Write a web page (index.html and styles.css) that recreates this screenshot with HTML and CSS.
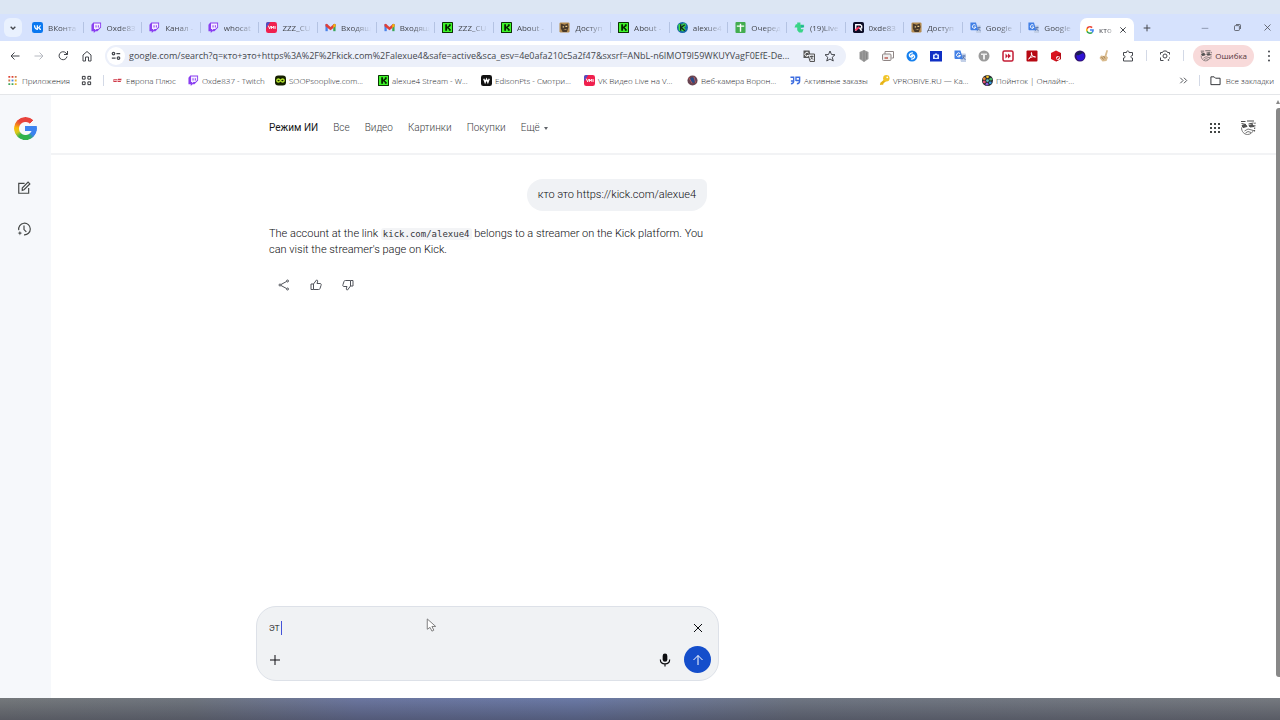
FILE: index.html
```html
<!DOCTYPE html>
<html lang="ru">
<head>
  <meta charset="UTF-8" />
  <title>кто это https://kick.com/alexue4 - Google</title>
  <meta name="viewport" content="width=device-width, initial-scale=1.0" />
  <link rel="stylesheet" href="styles.css">
</head>
<body>

  <!-- Shared icons -->
  <svg class="sprite" aria-hidden="true">
    <symbol id="vk" viewBox="0 0 24 24"><rect width="24" height="24" rx="5" fill="#0a78f0"/><path d="M4 7c.2 6.500 3.500 10.500 9 10.500V13.500c2 .3 3.300 2 4 4h3c-.8-2.800-2.500-4.500-4-5.300 1.500-.9 3-2.800 3.500-5.200h-2.700c-.6 2-2 4-3.800 4.200V7h-2.700v7C8.500 13.500 7 11 6.800 7z" fill="#fff"/></symbol>
    <symbol id="twitch" viewBox="0 0 24 24"><path d="M5 1 1 6v14h5v4l4-4h4l8-8V1z" fill="#8a3ff0"/><path d="M6.500 3.500H20V11l-4 4h-4l-3 3v-3H6.500z" fill="#f5efff"/><path d="M11 7v5M16 7v5" stroke="#8a3ff0" stroke-width="2.200"/></symbol>
    <symbol id="vkvideo" viewBox="0 0 24 24"><rect width="24" height="24" rx="5" fill="#f0204e"/><path d="M0 5a5 5 0 0 1 5-5l4 0L0 14z" fill="#4a50c8"/><path d="M5 8l3 7 2-6M12 15V9l2.500 4L17 9v6M20 9v6" fill="none" stroke="#fff" stroke-width="2"/></symbol>
    <symbol id="gmail" viewBox="0 0 24 24"><path d="M1 5h5v15H1z" fill="#4a82e8"/><path d="M18 5h5v15h-5z" fill="#3aa657"/><path d="M1 5l3-1 8 7 8-7 3 1v4l-11 9L1 9z" fill="#e0403a"/><path d="M18 6l3-2 2 2v3l-5 4z" fill="#f3b90d"/></symbol>
    <symbol id="kick" viewBox="0 0 24 24"><rect width="24" height="24" rx="1" fill="#062300"/><rect x="2" y="2" width="20" height="20" fill="#3ef52a"/><path d="M7 5h4v5h2V8h2V5h4v4h-2v2h-2v2h2v2h2v4h-4v-3h-2v-2h-2v5H7z" fill="#062300"/></symbol>
    <symbol id="access" viewBox="0 0 24 24"><rect x="1" y="1" width="22" height="22" rx="3" fill="#b58c50"/><path d="M4 3l8 3 7-3 2 8-4 11H8L4 14z" fill="#493a2a"/><path d="M8 9h3v3H8zM14 8h4v3h-4zM9 16l7-1v2z" fill="#efcf8e"/></symbol>
    <symbol id="kround" viewBox="0 0 24 24"><circle cx="12" cy="12" r="12" fill="#1768a8"/><path d="M3 5h8v14H4z" fill="#43e43c"/><path d="M12 3h7v6l-4 3 4 4-3 4h-5z" fill="#43e43c"/><path d="M8 5v14M17 6l-8 6 8 7" fill="none" stroke="#102b1c" stroke-width="3"/></symbol>
    <symbol id="sheet" viewBox="0 0 24 24"><rect x="1" width="22" height="24" rx="2" fill="#43ad50"/><path d="M4 9h16M12 4v17" stroke="#fff" stroke-width="3"/></symbol>
    <symbol id="live" viewBox="0 0 24 24"><path d="M7 1h7v5h8v6h-7v4h6l-3 7h-7l-4-5v-6H1l3-7h3z" fill="#39d487"/><path d="M16 6v7l6-3" fill="#20a9a0"/></symbol>
    <symbol id="rr" viewBox="0 0 24 24"><rect width="24" height="24" rx="4" fill="#0c0d28"/><path d="M6 19V6h10l3 3v4l-4 1 4 5" fill="none" stroke="#fff" stroke-width="3"/><path d="M5 18l9-7" stroke="#ff3b62" stroke-width="4"/></symbol>
    <symbol id="translate" viewBox="0 0 24 24"><path d="M9 7h13a2 2 0 0 1 2 2v15H14z" fill="#c3d0e7"/><path d="M1 1h12l5 17H3a2 2 0 0 1-2-2z" fill="#4280e6"/><path d="M12 7a4 4 0 1 0 1 4H9" fill="none" stroke="#fff" stroke-width="2"/><path d="M16 12h7M20 10v2c0 3-2 5-4 7M18 14l5 6" fill="none" stroke="#4868a5" stroke-width="1.500"/></symbol>
    <symbol id="google" viewBox="0 0 48 48"><path fill="#ea4335" d="M24 9.500c3.540 0 6.710 1.220 9.210 3.600l6.850-6.850C35.900 2.380 30.470 0 24 0 14.620 0 6.510 5.380 2.560 13.220l7.980 6.190C12.430 13.720 17.740 9.500 24 9.500z"/><path fill="#4285f4" d="M46.980 24.550c0-1.570-.15-3.090-.38-4.550H24v9.020h12.940c-.58 2.960-2.260 5.480-4.780 7.180l7.730 6c4.510-4.180 7.090-10.360 7.090-17.650z"/><path fill="#fbbc05" d="M10.530 28.590A14.500 14.500 0 0 1 9.770 24c0-1.600.27-3.140.76-4.590l-7.980-6.190A23.900 23.900 0 0 0 0 24c0 3.880.92 7.540 2.560 10.780z"/><path fill="#34a853" d="M24 48c6.480 0 11.930-2.130 15.890-5.810l-7.730-6c-2.150 1.450-4.920 2.300-8.160 2.300-6.260 0-11.570-4.220-13.470-9.910l-7.980 6.190C6.510 42.620 14.620 48 24 48z"/></symbol>
    <symbol id="close" viewBox="0 0 24 24"><path d="M4 4l16 16M20 4 4 20"/></symbol>
    <symbol id="plus" viewBox="0 0 24 24"><path d="M12 2v20M2 12h20"/></symbol>
    <symbol id="face" viewBox="0 0 32 32"><g fill="none" stroke="#4a4a4a" stroke-width="2"><path d="M2 3h9M14 2h14M3 7l9 2M17 8l10-2"/><path d="M4 11l7-2 3 4-8 2zM18 11l7-2 3 4-8 1z" fill="#555"/><path d="M3 15c0 8 5 14 12 14 6 0 10-4 12-9M9 22l7-4 11 3M11 26l5-3 6 2" stroke-width="1.500"/><path d="M30 5l-1 20" stroke-dasharray="3 2"/></g></symbol>
  </svg>

  <header class="browser">
    <div class="tabstrip">
      <button class="tab-search" aria-label="Поиск вкладок"><svg class="line" viewBox="0 0 24 24"><path d="M5 8l7 7 7-7"/></svg></button>
      <nav class="tabs" aria-label="Вкладки">
        <a class="tab" href="#"><svg><use href="#vk"/></svg><span>ВКонта</span></a>
        <a class="tab" href="#"><svg><use href="#twitch"/></svg><span>Oxde83</span></a>
        <a class="tab" href="#"><svg><use href="#twitch"/></svg><span>Канал -</span></a>
        <a class="tab" href="#"><svg><use href="#twitch"/></svg><span>whocat</span></a>
        <a class="tab" href="#"><svg><use href="#vkvideo"/></svg><span>ZZZ_CU</span></a>
        <a class="tab" href="#"><svg><use href="#gmail"/></svg><span>Входящ</span></a>
        <a class="tab" href="#"><svg><use href="#gmail"/></svg><span>Входящ</span></a>
        <a class="tab" href="#"><svg><use href="#kick"/></svg><span>ZZZ_CU</span></a>
        <a class="tab" href="#"><svg><use href="#kick"/></svg><span>About -</span></a>
        <a class="tab" href="#"><svg><use href="#access"/></svg><span>Доступ</span></a>
        <a class="tab" href="#"><svg><use href="#kick"/></svg><span>About -</span></a>
        <a class="tab" href="#"><svg><use href="#kround"/></svg><span>alexue4</span></a>
        <a class="tab" href="#"><svg><use href="#sheet"/></svg><span>Очеред</span></a>
        <a class="tab" href="#"><svg><use href="#live"/></svg><span>(19)Live</span></a>
        <a class="tab" href="#"><svg><use href="#rr"/></svg><span>0xde83</span></a>
        <a class="tab" href="#"><svg><use href="#access"/></svg><span>Доступ</span></a>
        <a class="tab" href="#"><svg><use href="#translate"/></svg><span>Google</span></a>
        <a class="tab" href="#"><svg><use href="#translate"/></svg><span>Google</span></a>
      </nav>
      <div class="tab-active">
        <svg><use href="#google"/></svg><span>кто</span>
        <button aria-label="Закрыть вкладку"><svg class="line small"><use href="#close"/></svg></button>
      </div>
      <button class="new-tab" aria-label="Новая вкладка"><svg class="line"><use href="#plus"/></svg></button>
      <div class="window-buttons">
        <button class="minimize" aria-label="Свернуть"><svg class="line small" viewBox="0 0 24 24"><path d="M2 13h20"/></svg></button>
        <button aria-label="Развернуть"><svg class="line" viewBox="0 0 24 24"><rect x="4" y="7" width="13" height="13" rx="2"/><path d="M8 4h10a2 2 0 0 1 2 2v10"/></svg></button>
        <button class="quit" aria-label="Закрыть"><svg class="line"><use href="#close"/></svg></button>
      </div>
    </div>

    <div class="toolbar">
      <div class="nav-buttons">
        <button aria-label="Назад"><svg class="line" viewBox="0 0 24 24"><path d="M21 12H5M11 5l-7 7 7 7"/></svg></button>
        <button class="disabled" aria-label="Вперёд"><svg class="line" viewBox="0 0 24 24"><path d="M3 12h16M13 5l7 7-7 7"/></svg></button>
        <button aria-label="Обновить"><svg class="line" viewBox="0 0 24 24"><path d="M20 13a8 8 0 1 1-2-7l3 3M21 2v7h-7"/></svg></button>
        <button aria-label="Главная"><svg class="line" viewBox="0 0 24 24"><path d="M4 22V10l8-7 8 7v12h-5v-8H9v8z"/></svg></button>
      </div>
      <div class="address">
        <button class="site-info" aria-label="Сведения о сайте"><svg class="line" viewBox="0 0 24 24"><circle cx="6" cy="6" r="3"/><path d="M13 6h9M2 17h9"/><circle cx="18" cy="17" r="3"/></svg></button>
        <input class="url" aria-label="Адресная строка" value="google.com/search?q=кто+это+https%3A%2F%2Fkick.com%2Falexue4&amp;safe=active&amp;sca_esv=4e0afa210c5a2f47&amp;sxsrf=ANbL-n6IMOT9I59WKUYVagF0EfE-De...">
        <button aria-label="Перевести"><svg viewBox="0 0 24 24"><path d="M1 1h12l3 15H1z" fill="#555"/><path d="M10 8h13v15H14z" fill="#e3e5ea" stroke="#555" stroke-width="2"/><path d="M11 6a4 4 0 1 0 0 5H8" fill="none" stroke="#fff" stroke-width="2"/><path d="M14 13h7M18 11v2c0 3-1 4-3 6M16 15l4 4" fill="none" stroke="#555" stroke-width="2"/></svg></button>
        <button aria-label="Добавить в закладки"><svg class="line" viewBox="0 0 24 24"><path d="M12 2l3 7 7 .5-5.500 5 2 7.500-6.500-4-6.500 4 2-7.500L2 9.500 9 9z"/></svg></button>
      </div>
      <div class="extensions">
        <button aria-label="Щит"><svg viewBox="0 0 24 24"><path d="M12 0l9 4v14l-9 6-9-6V4z" fill="#9b9b9b"/><path d="M12 1v22M6 5v13M17 5v13" stroke="#858585" stroke-width="2"/></svg></button>
        <button aria-label="Окна"><svg viewBox="0 0 24 24"><path d="M6 8V3h17v13h-4" fill="#fff" stroke="#8e8584" stroke-width="2"/><rect x="1" y="8" width="17" height="13" rx="2" fill="#eee" stroke="#8e8584" stroke-width="2"/><path d="M5 16h7" stroke="#bd5d55" stroke-width="3"/></svg></button>
        <button aria-label="Shazam"><svg viewBox="0 0 24 24"><circle cx="12" cy="12" r="11" fill="#1680ee"/><path d="M14 6c-4-1-9 3-7 6 2 4 7 2 7-1M10 18c4 1 9-3 7-6-2-4-7-2-7 1" fill="none" stroke="#fff" stroke-width="2.500"/></svg></button>
        <button aria-label="Снимок"><svg viewBox="0 0 24 24"><rect y="2" width="24" height="21" fill="#0f2fc4"/><path d="M6 9h3l1-2h4l1 2h3v9H6z" fill="#d8e6ff"/><circle cx="12" cy="13" r="3" fill="#1638cf"/></svg></button>
        <button aria-label="Переводчик"><svg><use href="#translate"/></svg></button>
        <button aria-label="Tampermonkey"><svg viewBox="0 0 24 24"><circle cx="12" cy="12" r="11" fill="#9b9b9b"/><path d="M6 7h12v3h-4v9h-4v-9H6z" fill="#eee"/></svg></button>
        <button aria-label="Перемотка"><svg viewBox="0 0 24 24"><rect x="2" y="2" width="20" height="20" rx="3" fill="#fff" stroke="#c41c35" stroke-width="3"/><path d="M7 7l5 5-5 5zM12 7l6 5-6 5z" fill="#c41c35"/></svg></button>
        <button aria-label="Acrobat"><svg viewBox="0 0 24 24"><rect x="1" y="1" width="22" height="22" rx="2" fill="#b70813"/><path d="M5 18c4-2 8-10 6-13-2 1 2 9 8 9-3-2-10 0-14 4z" fill="none" stroke="#fff" stroke-width="2"/></svg></button>
        <button aria-label="Куб"><svg viewBox="0 0 24 24"><path d="M12 1l10 5v12l-10 5-10-5V6z" fill="#d9131e"/><path d="M12 12l10-6v12l-10 5z" fill="#b20d17"/><circle cx="16" cy="16" r="4" fill="#fff"/><path d="M14 18l4-4" stroke="#d9131e" stroke-width="3"/></svg></button>
        <button aria-label="Тема"><svg viewBox="0 0 24 24"><circle cx="12" cy="12" r="11" fill="#2f126a"/><circle cx="13" cy="13" r="8" fill="#2f12d6"/><path d="M3 8l9-6 6 4-10 5z" fill="#182050"/></svg></button>
        <button aria-label="Жест"><svg viewBox="0 0 24 24"><path d="M17 0l3 1-3 11 3 3-3 7-8 1-6-7 3-5 7 1z" fill="#d9bb8e"/><path d="M7 14l4 5M11 12l3 5" stroke="#a98658" stroke-width="2"/></svg></button>
        <button aria-label="Расширения"><svg class="line" viewBox="0 0 24 24"><path d="M3 5h6c-1-4 6-4 5 0h7v6c-4-1-4 6 0 5v6H3v-6c4 1 4-6 0-5z"/></svg></button>
      </div>
      <span class="divider"></span>
      <button aria-label="Поиск с Объективом"><svg class="line" viewBox="0 0 24 24"><path d="M3 9V5h4l2-3h6l2 3h4v4M3 15v6h6M21 15v2"/><circle cx="12" cy="12" r="4"/><circle cx="19" cy="20" r="1"/></svg></button>
      <span class="divider"></span>
      <button class="profile"><svg><use href="#face"/></svg>Ошибка</button>
      <button class="menu" aria-label="Меню"><svg viewBox="0 0 24 24"><circle cx="12" cy="3" r="2"/><circle cx="12" cy="12" r="2"/><circle cx="12" cy="21" r="2"/></svg></button>
    </div>

    <nav class="bookmarks" aria-label="Закладки">
      <a class="apps" href="#"><svg viewBox="0 0 24 24"><path d="M3 4h4M10 4h4" stroke="#df4436" stroke-width="4"/><path d="M17 4h4M3 12h4" stroke="#cb7848" stroke-width="4"/><path d="M10 12h4" stroke="#4285e5" stroke-width="4"/><path d="M17 12h4M17 20h4" stroke="#e9b32a" stroke-width="4"/><path d="M3 20h4M10 20h4" stroke="#40a65b" stroke-width="4"/></svg>Приложения</a>
      <a class="grid" href="#" aria-label="Группа"><svg class="line" viewBox="0 0 24 24"><path d="M3 3h6v6H3zM15 3h6v6h-6zM3 15h6v6H3zM15 15h6v6h-6z"/></svg></a>
      <span class="divider"></span>
      <a class="europa" href="#"><svg viewBox="0 0 24 24"><path d="M3 9h9l-2 6H3zM13 8h8l-2 7h-7z" fill="#cf3948"/><path d="M4 12h16" stroke="#f5c9ce" stroke-width="2"/></svg>Европа Плюс</a>
      <a class="twitch" href="#"><svg><use href="#twitch"/></svg>Oxde837 - Twitch</a>
      <a class="mark" href="#"><svg viewBox="0 0 24 24"><rect y="1" width="24" height="22" rx="7" fill="#152000"/><path d="M12 12c-3-5-8-4-8 0s5 5 8 0 8-4 8 0-5 5-8 0z" fill="none" stroke="#b6e72d" stroke-width="3"/></svg>SOOPsooplive.com...</a>
      <a class="mark" href="#"><svg><use href="#kick"/></svg>alexue4 Stream - W...</a>
      <a class="mark" href="#"><svg viewBox="0 0 24 24"><rect width="24" height="24" rx="5" fill="#111"/><path d="M6 8l3 8 3-7 3 7 3-8" fill="none" stroke="#fff" stroke-width="3"/></svg>EdisonPts - Смотри...</a>
      <a class="mark" href="#"><svg><use href="#vkvideo"/></svg>VK Видео Live на V...</a>
      <a class="mark" href="#"><svg viewBox="0 0 24 24"><circle cx="12" cy="12" r="11" fill="#674451"/><circle cx="13" cy="11" r="6" fill="#2a4b86"/><path d="M4 6l7 12M15 4l4 13" stroke="#c75a56" stroke-width="2"/></svg>Веб-камера Ворон...</a>
      <a class="orders" href="#"><svg viewBox="0 0 24 24"><path d="M1 5h7v8H2M8 13c0 4-2 6-6 6M13 13V5h8v8M21 13c0 4-2 6-6 6M13 12h8" fill="none" stroke="#3d6de0" stroke-width="3"/></svg>Активные заказы</a>
      <a class="mark" href="#"><svg viewBox="0 0 24 24"><path d="M2 22l1-5L12 9l4 4-6 5-1 3H5z" fill="#e6b316"/><circle cx="16" cy="7" r="7" fill="#f1c52a"/><circle cx="18" cy="5" r="2" fill="#fff"/></svg>VPROBIVE.RU — Ка...</a>
      <a class="mark" href="#"><svg viewBox="0 0 24 24"><circle cx="12" cy="12" r="12" fill="#272930"/><circle cx="12" cy="4" r="3" fill="#f0c52b"/><circle cx="19" cy="9" r="3" fill="#47b963"/><circle cx="18" cy="17" r="3" fill="#3699dc"/><circle cx="11" cy="20" r="3" fill="#885ad6"/><circle cx="5" cy="15" r="3" fill="#e55075"/><circle cx="5" cy="8" r="3" fill="#e88b32"/><circle cx="12" cy="12" r="3" fill="#62c1c5"/></svg>Пойнток | Онлайн-...</a>
      <div class="all-bookmarks">
        <button aria-label="Ещё закладки"><svg class="line" viewBox="0 0 24 24"><path d="M5 6l6 6-6 6M13 6l6 6-6 6"/></svg></button>
        <span class="divider"></span>
        <a href="#"><svg class="line" viewBox="0 0 24 24"><path d="M2 4h7l3 3h10v14H2z"/></svg>Все закладки</a>
      </div>
    </nav>
  </header>

  <div class="page">
    <aside class="sidebar">
      <a class="logo" href="#" aria-label="Google"></a>
      <button aria-label="Новый запрос"><svg class="line" viewBox="0 0 24 24"><path d="M13 4H3v17h17v-9"/><path d="M9 16v-4L19 2l3 3-10 10z"/></svg></button>
      <button aria-label="История"><svg class="line" viewBox="0 0 24 24"><path d="M3 14A10 10 0 1 1 12 22M12 6v7l4 4"/><path d="M5 15l1 3 3 1-3 1-1 3-1-3-3-1 3-1z" fill="currentColor" stroke="none"/></svg></button>
    </aside>

    <main>
      <div class="topbar">
        <nav class="filters" aria-label="Разделы поиска">
          <a class="current" href="#">Режим ИИ</a>
          <a href="#">Все</a>
          <a href="#">Видео</a>
          <a href="#">Картинки</a>
          <a href="#">Покупки</a>
          <a href="#">Ещё<i class="arrow"></i></a>
        </nav>
        <div class="account">
          <button aria-label="Приложения Google"><svg viewBox="0 0 24 24"><path d="M2 4h4M10 4h4M18 4h4M2 12h4M10 12h4M18 12h4M2 20h4M10 20h4M18 20h4" stroke="#444746" stroke-width="4"/></svg></button>
          <button class="avatar" aria-label="Аккаунт"><svg><use href="#face"/></svg></button>
        </div>
      </div>

      <section class="chat">
        <p class="question">кто это https://kick.com/alexue4</p>
        <p class="answer">The account at the link <code>kick.com/alexue4</code> belongs to a streamer on the Kick platform. You can visit the streamer's page on Kick.</p>
        <div class="actions">
          <button aria-label="Поделиться"><svg class="line" viewBox="0 0 24 24"><circle cx="19" cy="4" r="2"/><circle cx="4" cy="12" r="2"/><circle cx="19" cy="20" r="2"/><path d="M6 11l11-6M6 13l11 6"/></svg></button>
          <button aria-label="Нравится"><svg class="line" viewBox="0 0 24 24"><path d="M7 10l6-8c2 0 3 1 2 4l-1 3h6c2 0 3 1 2 4l-2 6c-.5 1.500-1 2-3 2H7zM7 10H2v11h5"/></svg></button>
          <button aria-label="Не нравится"><svg class="line" viewBox="0 0 24 24"><path d="M17 14l-6 8c-2 0-3-1-2-4l1-3H4c-2 0-3-1-2-4l2-6c.5-1.500 1-2 3-2h10zM17 14h5V3h-5"/></svg></button>
        </div>
      </section>

      <form class="prompt">
        <div class="prompt-row">
          <input class="prompt-text" aria-label="Задайте вопрос" value="эт"><span class="caret"></span>
          <button class="clear" type="button" aria-label="Очистить"><svg class="line"><use href="#close"/></svg></button>
        </div>
        <div class="prompt-row">
          <button type="button" aria-label="Добавить"><svg class="line"><use href="#plus"/></svg></button>
          <button class="mic" type="button" aria-label="Голосовой ввод"><svg viewBox="0 0 24 24"><rect x="8" y="1" width="8" height="14" rx="4"/><path d="M4 11c0 10 16 10 16 0M12 18v5" fill="none" stroke="currentColor" stroke-width="2"/></svg></button>
          <button class="send" type="submit" aria-label="Отправить"><svg class="line" viewBox="0 0 24 24"><path d="M12 22V3M3 12l9-9 9 9"/></svg></button>
        </div>
        <svg class="pointer" viewBox="0 0 12 16"><path d="M2 1v11l3-2 2 4 2-1-2-4h4z" fill="#fff" stroke="#777" stroke-width="1"/></svg>
      </form>
    </main>
    <div class="scrollbar"><span class="scroll-up"></span><span class="thumb"></span></div>
  </div>

  <footer class="taskbar"></footer>
</body>
</html>
```
FILE: styles.css
```css
* {
  box-sizing: border-box;
}

body {
  margin: 0;
  height: 100vh;
  display: flex;
  flex-direction: column;
  overflow: hidden;
  background: #fff;
  font-family: Roboto, "Liberation Sans", sans-serif;
  font-size: 11px;
  font-weight: 300;
  color: #0c0d10;
}

a {
  color: inherit;
  text-decoration: none;
}

button,
input {
  font: inherit;
  color: inherit;
  background: none;
  border: none;
  padding: 0;
  outline: none;
}

button {
  display: flex;
  align-items: center;
  justify-content: center;
  flex: none;
}

svg {
  width: 12px;
  height: 12px;
  flex: none;
  display: block;
  fill: currentColor;
}

.line {
  fill: none;
  stroke: currentColor;
  stroke-width: 2;
}

.sprite {
  position: absolute;
  width: 0;
  height: 0;
}

.divider {
  width: 1px;
  height: 11px;
  background: #d3d9e6;
  flex: none;
}

/* Browser window */

.browser {
  flex: none;
  height: 95px;
  border-bottom: 1px solid #e4e6e9;
  font-family: "Open Sans", "Noto Sans", sans-serif;
  font-size: 8px;
  font-weight: 400;
  color: #44474d;
}

.tabstrip {
  display: flex;
  align-items: center;
  height: 41px;
  padding: 14px 0 0 4px;
  background: linear-gradient(#dce6f3 14px, #d6e2fd 14px);
}

.tab-search {
  width: 18px;
  height: 19px;
  border-radius: 6px;
  background: #e9f1fe;
}

.tab-search svg {
  width: 8px;
  height: 8px;
  stroke-width: 4;
}

.tabs {
  flex: 1;
  display: flex;
  min-width: 0;
  margin-left: 3px;
}

.tab {
  flex: 1 1 0;
  min-width: 0;
  display: flex;
  align-items: center;
  gap: 5px;
  padding: 0 2px 0 7px;
  border-right: 1px solid #b4c3e3;
  height: 11px;
}

.tab:last-child {
  border-color: transparent;
}

.tab svg,
.tab-active > svg {
  width: 11px;
  height: 11px;
}

.tab > span,
.tab-active > span {
  flex: 1;
  white-space: nowrap;
  mask-image: linear-gradient(to right, #000 12px, transparent 30px);
}

.tab-active > span {
  mask-image: linear-gradient(to right, #000 6px, transparent 16px);
}

.tab-active {
  width: 54px;
  height: 23px;
  margin-top: 4px;
  padding: 0 7px 0 6px;
  display: flex;
  align-items: center;
  gap: 5px;
  background: #fff;
  border-radius: 7px 7px 0 0;
}

.tab-active > svg {
  width: 8px;
  height: 8px;
}

.line.small {
  width: 8px;
  height: 8px;
  stroke-width: 3;
}

.new-tab {
  width: 26px;
}

.new-tab svg {
  width: 8px;
  height: 8px;
  stroke-width: 3;
}

.window-buttons {
  display: flex;
  gap: 2px;
  margin-left: 30px;
}

.window-buttons button {
  width: 30px;
}

.window-buttons .quit {
  width: 26px;
}

.window-buttons svg {
  width: 9px;
  height: 9px;
}

.window-buttons .minimize {
  color: #909bb2;
}

.toolbar {
  display: flex;
  align-items: center;
  gap: 12px;
  height: 29px;
  padding: 0 5px 0 9px;
}

.nav-buttons,
.extensions {
  display: flex;
  gap: 12px;
}

.disabled {
  color: #b6b9c0;
}

.address {
  flex: 1;
  min-width: 0;
  display: flex;
  align-items: center;
  gap: 9px;
  height: 22px;
  padding: 0 10px 0 2px;
  border-radius: 11px;
  background: #ecf0fa;
}

.site-info {
  width: 18px;
  height: 18px;
  border-radius: 50%;
  background: #fff;
}

.site-info svg {
  width: 10px;
  height: 10px;
  stroke-width: 3;
}

.url {
  flex: 1;
  min-width: 0;
  margin-left: -5px;
  font-size: 9px;
}

.profile {
  height: 22px;
  padding: 0 7px;
  margin-left: -3px;
  gap: 3px;
  border-radius: 11px;
  background: #f8dada;
  color: #53383b;
}

.menu {
  margin-left: -3px;
}

.bookmarks {
  display: flex;
  align-items: center;
  height: 21px;
  padding: 0 6px 0 7px;
  white-space: nowrap;
}

.bookmarks a {
  display: flex;
  align-items: center;
  gap: 3px;
  flex: none;
  font-weight: 300;
  color: #24262b;
}

.bookmarks svg {
  width: 11px;
  height: 11px;
}

.bookmarks .apps {
  width: 74px;
  gap: 4px;
}

.grid {
  width: 22px;
}

.europa {
  width: 76px;
  margin-left: 8px;
}

.twitch {
  width: 87px;
}

.mark {
  width: 103px;
}

.orders {
  width: 89px;
}

.all-bookmarks {
  display: flex;
  align-items: center;
  gap: 10px;
  margin-left: auto;
}

.all-bookmarks a {
  gap: 5px;
}

/* Search page */

.page {
  flex: 1;
  min-height: 0;
  display: flex;
}

.sidebar {
  flex: none;
  width: 51px;
  padding: 22px 0 0 14px;
  background: #f6f8fb;
  color: #444746;
}

.logo {
  display: block;
  width: 23px;
  height: 23px;
  border-radius: 50%;
  background:
    linear-gradient(#3d83f0, #3d83f0) 100% 50% / 12px 5px no-repeat,
    conic-gradient(from 0deg, #e8433c 0 12%, #f6f8fb 12% 24%, #3b82ef 27% 36%, #2fb24c 44% 60%, #d5c81e 68%, #fbbc05 76%, #ef6b28 84%, #e8433c 90%);
  mask-image: radial-gradient(circle at center, transparent 6px, #000 7px), linear-gradient(#000, #000);
  mask-size: 100% 100%, 12px 5px;
  mask-position: 0 0, 100% 50%;
  mask-repeat: no-repeat;
}

.sidebar button {
  width: 20px;
  height: 24px;
  margin-top: 17px;
}

.sidebar .logo + button {
  margin-top: 36px;
}

.sidebar svg {
  width: 14px;
  height: 14px;
}

main {
  flex: 1;
  min-width: 0;
  display: flex;
  flex-direction: column;
}

.topbar {
  flex: none;
  display: flex;
  justify-content: space-between;
  align-items: center;
  height: 60px;
  padding: 8px 20px 0 218px;
  border-bottom: 2px solid #f2f3f5;
  line-height: 16px;
}

.filters {
  display: flex;
  gap: 15px;
  font-size: 10px;
  color: #3c4043;
}

.filters .current {
  font-weight: 400;
  color: #16171a;
}

.arrow {
  display: inline-block;
  margin-left: 4px;
  vertical-align: middle;
  border: 2px solid transparent;
  border-top: 3px solid #60646a;
  border-bottom: 0;
}

.account {
  display: flex;
  align-items: center;
  gap: 19px;
}

.avatar svg {
  width: 16px;
  height: 16px;
}

.chat {
  flex: 1;
  display: flex;
  flex-direction: column;
  width: 438px;
  margin-left: 218px;
  padding-top: 24px;
  line-height: 16px;
}

.question {
  align-self: flex-end;
  margin: 0;
  padding: 8px 11px;
  border-radius: 16px 6px 16px 16px;
  background: #f0f2f5;
}

.answer {
  margin: 15px 0 0;
}

code {
  padding: 1px 2px;
  border-radius: 3px;
  background: #f3f4f6;
  font-family: "DejaVu Sans Mono", monospace;
  font-size: 9px;
  line-height: 9px;
  color: #33363b;
}

.actions {
  display: flex;
  gap: 20px;
  margin: 21px 0 0 9px;
  color: #50535a;
}

.prompt {
  position: relative;
  flex: none;
  width: 463px;
  margin: 0 0 17px 205px;
  padding: 7px 7px 7px 12px;
  border: 1px solid #dde1e8;
  border-radius: 20px;
  background: #f0f2f4;
}

.prompt-row {
  display: flex;
  align-items: center;
  height: 27px;
}

.prompt-row + .prompt-row {
  margin-top: 5px;
}

.prompt-text {
  field-sizing: content;
}

.caret {
  width: 1px;
  height: 14px;
  margin-left: 1px;
  background: #4453d8;
}

.clear {
  width: 27px;
  margin-left: auto;
}

.mic {
  margin: 0 12px 0 auto;
}

.mic svg {
  width: 14px;
  height: 14px;
}

.send {
  width: 27px;
  height: 27px;
  border-radius: 50%;
  background: #144ecb;
  color: #fff;
}

.pointer {
  position: absolute;
  left: 168px;
  top: 11px;
  height: 15px;
}

.scrollbar {
  flex: none;
  width: 4px;
  padding: 5px 0 21px;
  display: flex;
  flex-direction: column;
  gap: 4px;
}

.scroll-up {
  border: 2px solid transparent;
  border-top: 0;
  border-bottom: 4px solid #888;
}

.thumb {
  flex: 1;
  border-radius: 3px 0 0 3px;
  background: #888;
}

.taskbar {
  flex: none;
  height: 22px;
  background:
    linear-gradient(transparent, rgba(45, 45, 60, 0.4)),
    linear-gradient(to right, #75797c, #70767f 15%, #6c77a0 28%, #6b7aa6 45%, #6f7683 62%, #767a80);
}
```
